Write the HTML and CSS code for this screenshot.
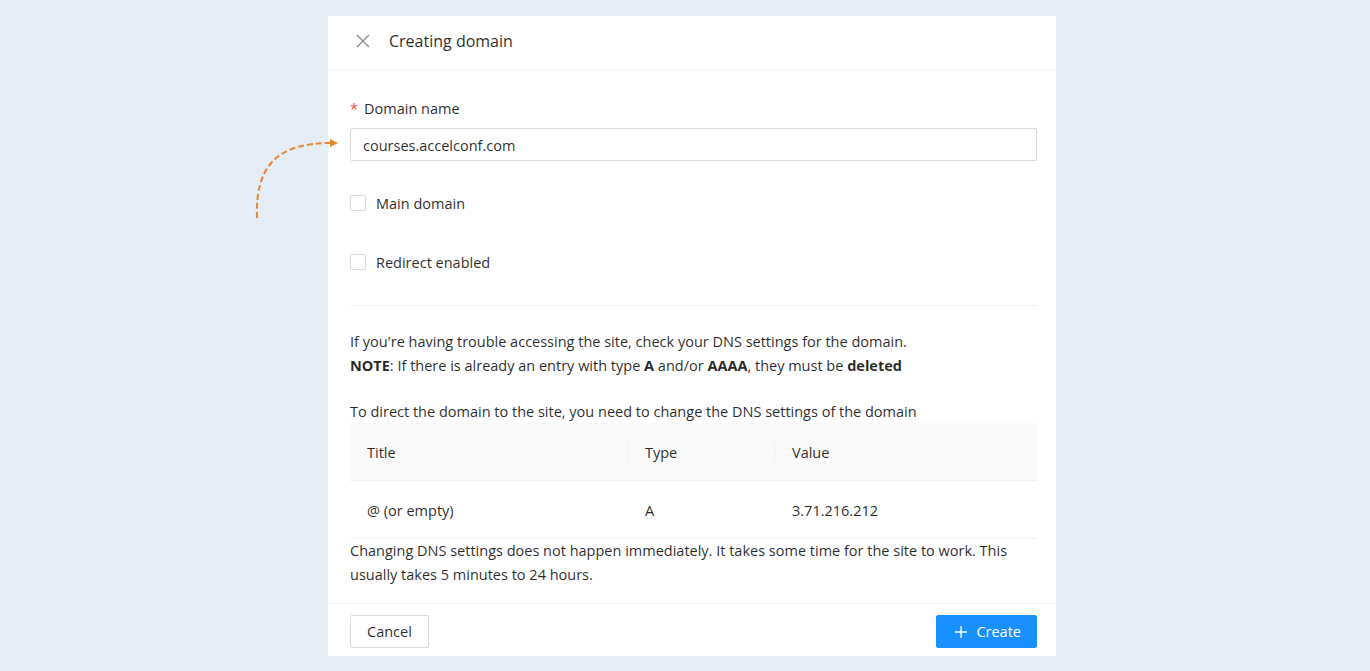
FILE: index.html
```html
<!DOCTYPE html>
<html lang="en">
<head>
<meta charset="UTF-8">
<meta name="viewport" content="width=device-width, initial-scale=1.0">
<title>Creating domain</title>
<link rel="stylesheet" href="styles.css">
</head>
<body>
<svg class="hint-arrow" width="100" height="95" viewBox="0 0 100 95">
  <path d="M12 88 C10 35 33 13 86 13" fill="none" stroke="#e8862f" stroke-width="2" stroke-dasharray="6 3"/>
  <path d="M85 9 L93 13 L85 17 Z" fill="#e8862f"/>
</svg>
<div class="drawer">
  <div class="drawer-header">
    <svg class="close-icon" width="14" height="14" viewBox="0 0 14 14">
      <path d="M1 1 L13 13 M13 1 L1 13" stroke="#8c8c8c" stroke-width="1.4"/>
    </svg>
    <span class="drawer-title">Creating domain</span>
  </div>
  <div class="drawer-body">
    <div class="form-label"><span class="required">*</span>Domain name</div>
    <input type="text" class="text-input" value="courses.accelconf.com">
    <label class="check-row first"><span class="checkbox"></span>Main domain</label>
    <label class="check-row"><span class="checkbox"></span>Redirect enabled</label>
    <div class="divider"></div>
    <p class="info">If you're having trouble accessing the site, check your DNS settings for the domain.<br>
      <b>NOTE</b>: If there is already an entry with type <b>A</b> and/or <b>AAAA</b>, they must be <b>deleted</b></p>
    <p class="info-last">To direct the domain to the site, you need to change the DNS settings of the domain</p>
    <table class="dns-table">
      <thead>
        <tr><th class="col-title">Title</th><th class="col-type">Type</th><th>Value</th></tr>
      </thead>
      <tbody>
        <tr><td>@ (or empty)</td><td>A</td><td>3.71.216.212</td></tr>
      </tbody>
    </table>
    <p class="info">Changing DNS settings does not happen immediately. It takes some time for the site to work. This usually takes 5 minutes to 24 hours.</p>
  </div>
  <div class="drawer-footer">
    <button class="btn">Cancel</button>
    <button class="btn btn-primary">
      <svg width="14" height="14" viewBox="0 0 14 14"><path d="M7 1 V13 M1 7 H13" stroke="#fff" stroke-width="1.3"/></svg>
      Create
    </button>
  </div>
</div>
</body>
</html>
```

FILE: styles.css
```css
body {
  margin: 0;
  padding-left: 14px;
  background: #e5edf6;
  font-family: "Open Sans", "Noto Sans", sans-serif;
  font-size: 14.5px;
  color: rgba(0, 0, 0, 0.85);
}

.hint-arrow {
  position: absolute;
  left: 245px;
  top: 130px;
}

.drawer {
  width: 728px;
  margin: 16px auto 0;
  background: #fff;
}

.drawer-header {
  height: 50px;
  padding-bottom: 3px;
  display: flex;
  align-items: center;
  padding-left: 28px;
  border-bottom: 1px solid #f0f0f0;
}

.close-icon {
  margin-right: 19px;
}

.drawer-title {
  font-size: 16px;
  color: rgba(0, 0, 0, 0.85);
}

.drawer-body {
  padding: 28px 19px 16px 22px;
}

.form-label {
  line-height: 22px;
  margin-bottom: 8px;
}

.required {
  color: #ff4d4f;
  margin-right: 6px;
}

.text-input {
  display: block;
  width: 100%;
  box-sizing: border-box;
  height: 33px;
  padding: 5px 12px 3px;
  border: 1px solid #d9d9d9;
  border-radius: 2px;
  font: inherit;
  color: rgba(0, 0, 0, 0.85);
  outline: none;
}

.check-row {
  display: flex;
  align-items: center;
  height: 22px;
  margin-top: 37px;
}

.check-row.first {
  margin-top: 31px;
}

.checkbox {
  width: 16px;
  height: 16px;
  box-sizing: border-box;
  border: 1px solid #d9d9d9;
  border-radius: 2px;
  margin-right: 10px;
}

.divider {
  height: 1px;
  background: #f0f0f0;
  margin: 32px 0 24px;
}

.info {
  margin: 0;
  line-height: 24px;
}

.info-last {
  margin: 23px 0 0;
  line-height: 22px;
}

.dns-table {
  width: 100%;
  border-collapse: collapse;
}

.dns-table th {
  background: #fafafa;
  font-weight: normal;
  text-align: left;
  height: 55px;
  padding: 2px 17px 0;
  border-bottom: 1px solid #f0f0f0;
  position: relative;
}

.dns-table th.col-title::after,
.dns-table th.col-type::after {
  content: "";
  position: absolute;
  right: 0;
  top: 18px;
  height: 22px;
  width: 1px;
  background: #f0f0f0;
}

.col-title {
  width: 244px;
}

.col-type {
  width: 113px;
}

.dns-table td {
  height: 55px;
  padding: 2px 17px 0;
  border-bottom: 1px solid #f0f0f0;
}

.drawer-footer {
  border-top: 1px solid #f0f0f0;
  padding: 11px 19px 8px 22px;
  display: flex;
  justify-content: space-between;
}

.btn {
  height: 33px;
  padding: 0 16px;
  border: 1px solid #d9d9d9;
  border-radius: 2px;
  background: #fff;
  font: inherit;
  color: rgba(0, 0, 0, 0.85);
  display: flex;
  align-items: center;
  gap: 8px;
}

.btn-primary {
  background: #1890ff;
  border-color: #1890ff;
  color: #fff;
  padding: 0 15px 0 17px;
}
```
